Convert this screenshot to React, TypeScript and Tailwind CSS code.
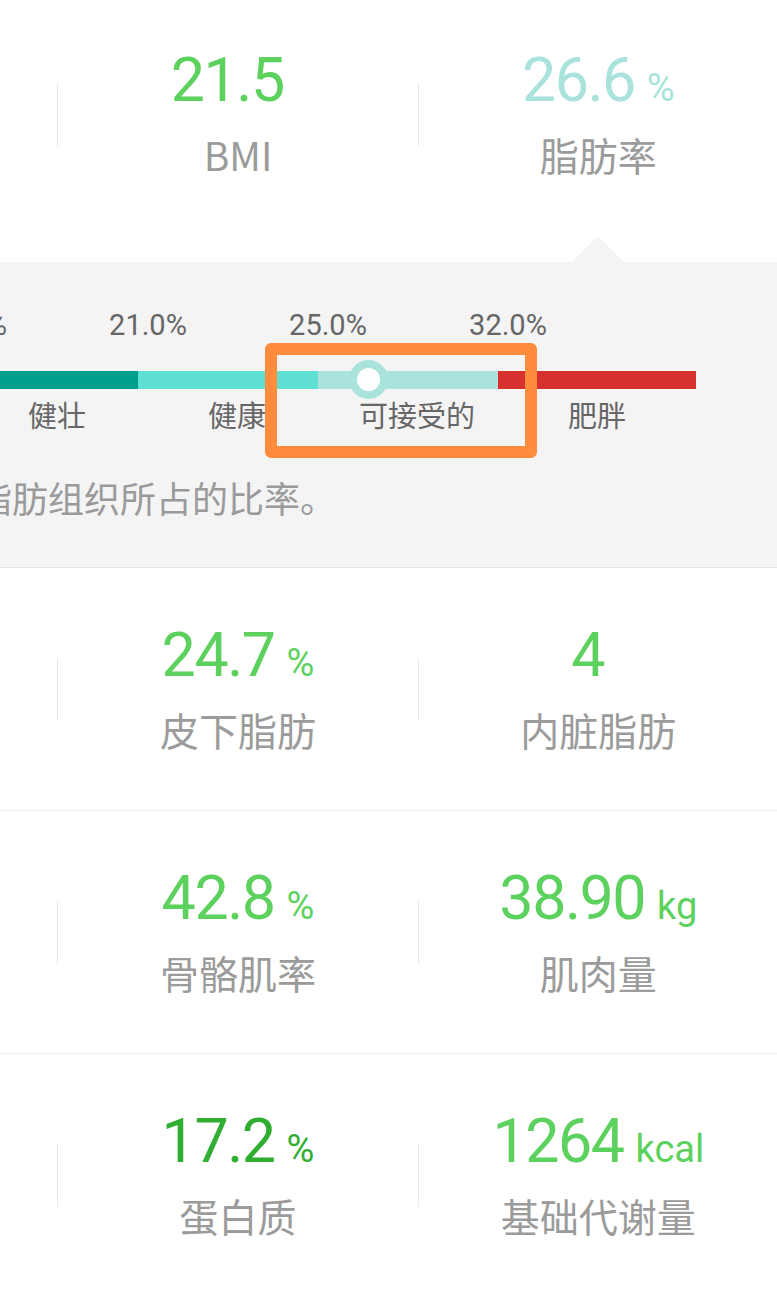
type Metric = {
  value: string
  unit: string
  label: string
  color: string
}

const GREEN = 'text-[#5dd15d]'

const topRow: Metric[] = [
  { value: '57.6', unit: 'kg', label: '体重', color: GREEN },
  { value: '21.5', unit: '', label: 'BMI', color: GREEN },
  { value: '26.6', unit: '%', label: '脂肪率', color: 'text-[#a9e3db]' },
]

const otherRows: Metric[][] = [
  [
    { value: '52.3', unit: '%', label: '水分', color: GREEN },
    { value: '24.7', unit: '%', label: '皮下脂肪', color: GREEN },
    { value: '4', unit: '', label: '内脏脂肪', color: GREEN },
  ],
  [
    { value: '2.61', unit: 'kg', label: '骨量', color: GREEN },
    { value: '42.8', unit: '%', label: '骨骼肌率', color: GREEN },
    { value: '38.90', unit: 'kg', label: '肌肉量', color: GREEN },
  ],
  [
    { value: '25', unit: '岁', label: '身体年龄', color: GREEN },
    { value: '17.2', unit: '%', label: '蛋白质', color: 'text-[#2fae32]' },
    { value: '1264', unit: 'kcal', label: '基础代谢量', color: GREEN },
  ],
]

const thresholds = ['14.0%', '21.0%', '25.0%', '32.0%']

const segments = [
  { name: '偏瘦', bar: 'w-[180px] bg-[#4fb3e8]' },
  { name: '健壮', bar: 'w-[180px] bg-[#009e8e]' },
  { name: '健康', bar: 'w-[180px] bg-[#5fded3]' },
  { name: '可接受的', bar: 'w-[180px] bg-[#a9e3db]' },
  { name: '肥胖', bar: 'w-[198px] bg-[#d8302f]' },
]

function MetricCell({ metric }: { metric: Metric }) {
  return (
    <div className="flex flex-1 flex-col items-center self-stretch pt-[57px]">
      <div className={`flex items-baseline font-['Roboto',sans-serif] ${metric.color}`}>
        <span className="text-[61px] leading-none tracking-[-1.5px]">{metric.value}</span>
        <span className="ml-[12px] text-[38px] leading-none">{metric.unit || '\u00a0'}</span>
      </div>
      <span className="mt-[24px] font-['Noto_Sans_CJK_SC',sans-serif] text-[39px] leading-none text-[#9b9b9b]">
        {metric.label}
      </span>
    </div>
  )
}

function MetricRow({ metrics, divided }: { metrics: Metric[]; divided?: boolean }) {
  return (
    <div className={`flex h-[243px] items-center ${divided ? 'border-b border-[#ececec]' : ''}`}>
      {metrics.map((metric, i) => (
        <div key={metric.label} className="contents">
          {i > 0 && <div className="h-[63px] w-px self-center bg-[#e8e8e8]" />}
          <MetricCell metric={metric} />
        </div>
      ))}
    </div>
  )
}

function FatRatePanel() {
  return (
    <>
      {/* caret pointing at the selected metric */}
      <div className="flex h-[26px]">
        <div className="flex-1" />
        <div className="flex-1" />
        <div className="flex flex-1 justify-center">
          <div className="h-0 w-0 border-r-[26px] border-b-[26px] border-l-[26px] border-r-transparent border-b-[#f4f4f4] border-l-transparent" />
        </div>
      </div>

      <div className="relative border-b border-[#e4e4e4] bg-[#f4f4f4] pt-[49px] pb-[52px]">
        <div className="flex pl-[180px] font-['Roboto',sans-serif] text-[29px] leading-none text-[#666666]">
          {thresholds.map((t) => (
            <span key={t} className="w-[180px] text-center">
              {t}
            </span>
          ))}
        </div>

        <div className="relative mt-[31px] ml-[80px] flex h-[18px] w-[918px]">
          {segments.map((s) => (
            <div key={s.name} className={`h-full ${s.bar}`} />
          ))}
          <div className="absolute top-[-11px] left-[571px] h-[39px] w-[39px] rounded-full border-[8px] border-[#a9e3db] bg-white" />
        </div>

        <div className="mt-[11px] flex pl-[89px] font-['Noto_Sans_CJK_SC',sans-serif] text-[29px] leading-none text-[#666666]">
          {segments.map((s) => (
            <span key={s.name} className="w-[180px] text-center">
              {s.name}
            </span>
          ))}
        </div>

        <p className="mt-[50px] pl-[62px] font-['Noto_Sans_CJK_SC',sans-serif] text-[36px] leading-none text-[#9a9a9a]">
          脂肪率是身体脂肪组织所占的比率。
        </p>

        {/* highlight around the current range */}
        <div className="absolute top-[81px] left-[567px] h-[115px] w-[272px] rounded-[6px] border-[12px] border-[#ff8b3d]" />
      </div>
    </>
  )
}

export default function App() {
  return (
    <div className="h-[1290px] w-[777px] overflow-hidden bg-white">
      <div className="mt-[-7px] ml-[-302px] w-[1080px]">
        <MetricRow metrics={topRow} />
        <FatRatePanel />
        {otherRows.map((row, i) => (
          <MetricRow key={i} metrics={row} divided={i < otherRows.length - 1} />
        ))}
      </div>
    </div>
  )
}
